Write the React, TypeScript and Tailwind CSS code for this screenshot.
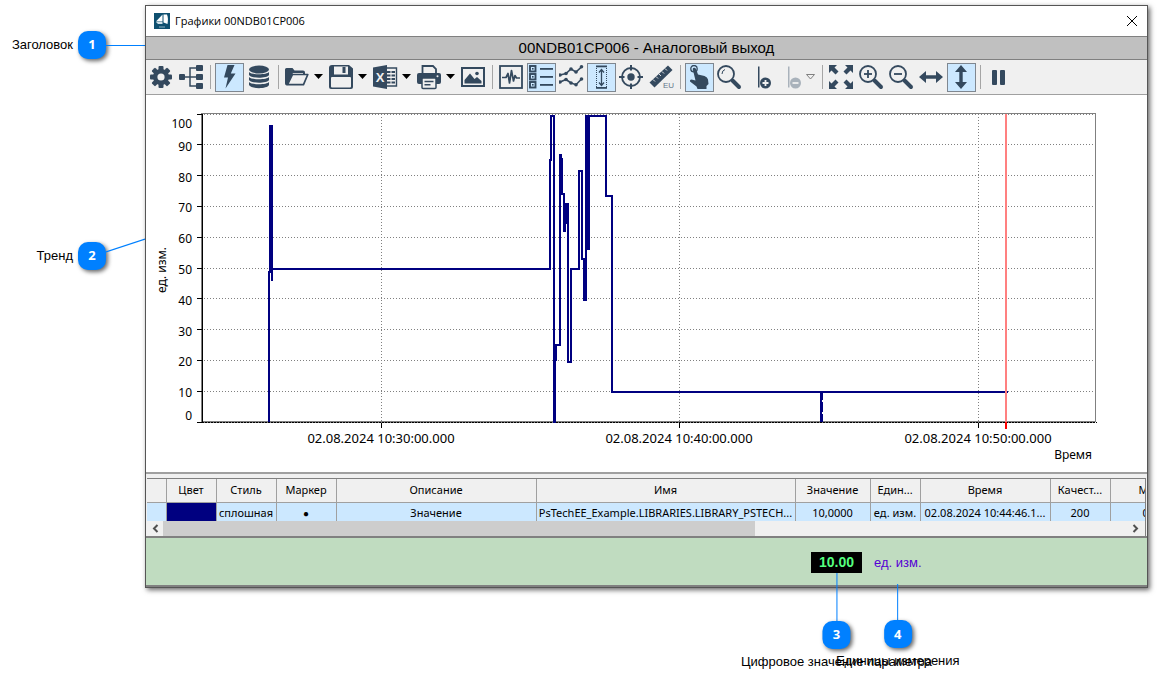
import React from 'react';

const INK = '#34495e';

interface IconProps {
    children: React.ReactNode;
    color?: string;
}

const Icon: React.FC<IconProps> = ({ children, color = INK }) => (
    <svg width="25" height="25" viewBox="0 0 25 25" fill={color} stroke="none" className="block shrink-0" aria-hidden="true">
        {children}
    </svg>
);

const GearIcon = () => (
    <Icon>
        {[0, 45, 90, 135].map((angle) => (
            <rect key={angle} x="9.5" y="1" width="5" height="22" rx="1" transform={`rotate(${angle} 12 12)`} />
        ))}
        <circle cx="12" cy="12" r="8" />
        <circle cx="12" cy="12" r="3.6" fill="#f0f0f0" />
    </Icon>
);

const TreeIcon = () => (
    <Icon>
        <rect x="0" y="9" width="6" height="6" rx="1" />
        <rect x="17" y="0" width="7" height="6" rx="1" />
        <rect x="17" y="9" width="7" height="6" rx="1" />
        <rect x="17" y="18" width="7" height="6" rx="1" />
        <path d="M6 12H17M17 3H11V21H17" fill="none" stroke={INK} strokeWidth="1.5" />
    </Icon>
);

const BoltIcon = () => (
    <Icon>
        <path d="M10.5 0H17.5L13.8 8.5H18.5L8.5 23.5L11 12.5H7Z" />
    </Icon>
);

const DatabaseIcon = () => (
    <Icon>
        <ellipse cx="12" cy="4.5" rx="10" ry="4" />
        <path d="M2 7C4 10 20 10 22 7V10C20 13.6 4 13.6 2 10Z" />
        <path d="M2 12C4 15 20 15 22 12V15C20 18.6 4 18.6 2 15Z" />
        <path d="M2 17C4 20 20 20 22 17V20C20 24.2 4 24.2 2 20Z" />
    </Icon>
);

const FolderIcon = () => (
    <Icon>
        <path d="M2 20.5Q0 20.5 0 18.5V4.5Q0 3 1.5 3H7.5L9.5 5.5H18Q20 5.5 20 7.5V9H18V8H8L3.5 17.5Z" />
        <path d="M7.5 9.5H22.8L18.5 19.7H2.5Z" fill="#f0f0f0" stroke={INK} strokeWidth="1.7" strokeLinejoin="round" />
    </Icon>
);

const SaveIcon = () => (
    <Icon>
        <path d="M3 0H20L24 3.5V22Q24 24 22 24H2Q0 24 0 22V3Q0 0 3 0Z" />
        <rect x="5" y="1.5" width="14" height="8" fill="#f0f0f0" />
        <rect x="13.5" y="2" width="3" height="6" />
        <rect x="2" y="12" width="20" height="10.5" rx="1" fill="#f0f0f0" />
    </Icon>
);

const ExcelIcon = () => (
    <Icon>
        <path d="M12 3H23.5V21H12Z" fill="#f0f0f0" stroke={INK} strokeWidth="1.4" />
        <path d="M14 7H22M14 10.5H22M14 14H22M14 17.5H22" stroke={INK} strokeWidth="2" strokeDasharray="3.5 1" />
        <path d="M0 2.5L14 0V24L0 21.5Z" />
        <text x="7" y="17" textAnchor="middle" fontSize="13" fontWeight="700" fontFamily="Liberation Sans, sans-serif" fill="#f0f0f0">X</text>
    </Icon>
);

const PrintIcon = () => (
    <Icon>
        <path d="M5.5 8V1H16L19 4V8" fill="none" stroke={INK} strokeWidth="1.8" />
        <path d="M2 8H22Q24 8 24 10V17Q24 19 22 19H2Q0 19 0 17V10Q0 8 2 8Z" />
        <rect x="5" y="13" width="14" height="10.5" rx="1" fill="#f0f0f0" stroke={INK} strokeWidth="1.5" />
        <path d="M7.5 16.5H16.5M7.5 19.8H13.5" stroke={INK} strokeWidth="1.4" />
        <circle cx="20.5" cy="11.2" r="1" fill="#f0f0f0" />
    </Icon>
);

const PictureIcon = () => (
    <Icon>
        <rect x="1" y="3" width="22" height="18" fill="#f0f0f0" stroke={INK} strokeWidth="2" />
        <path d="M3.5 18.5V15L9 8.5L13.5 14L16 12L20.5 16V18.5Z" />
        <circle cx="16" cy="8.5" r="1.8" />
    </Icon>
);

const PulseIcon = () => (
    <Icon>
        <rect x="1" y="1" width="22" height="22" fill="none" stroke={INK} strokeWidth="1.8" />
        <path d="M3 12.5H7L9 8.5L10.5 18L12.5 5.5L14.5 16L16 10.5L17.5 13H21" fill="none" stroke={INK} strokeWidth="1.7" strokeLinejoin="round" />
    </Icon>
);

const LegendIcon = () => (
    <Icon>
        {[1, 9, 17].map((y) => (
            <g key={y}>
                <rect x="1" y={y} width="5.5" height="5.5" fill="none" stroke={INK} strokeWidth="1.9" />
                <rect x="3" y={y + 2} width="1.6" height="1.6" />
                <rect x="11" y={y + 2} width="13" height="1.8" />
            </g>
        ))}
    </Icon>
);

const upperSeries = [[1, 10], [7, 8.5], [12, 4], [17, 7], [22.5, 1.8]];
const lowerSeries = [[1, 17], [7, 14.5], [12, 18], [17, 19.7], [22.5, 14]];

const SeriesIcon = () => (
    <Icon>
        {[upperSeries, lowerSeries].map((series, i) => (
            <g key={i}>
                <polyline points={series.map((p) => p.join(',')).join(' ')} fill="none" stroke={INK} strokeWidth="1.6" />
                {series.map(([x, y]) => <circle key={x} cx={x} cy={y} r="1.8" />)}
            </g>
        ))}
    </Icon>
);

const RangeIcon = () => (
    <Icon>
        <rect x="7" y="0.5" width="11" height="1.8" />
        <rect x="7" y="22" width="11" height="1.8" />
        <path d="M7.5 3V22M17.5 3V22" fill="none" stroke={INK} strokeWidth="1" strokeDasharray="1 1" />
        <path d="M12.5 5V20M10 7.5L12.5 4.5L15 7.5M10 17.5L12.5 20.5L15 17.5" fill="none" stroke={INK} strokeWidth="1.3" />
    </Icon>
);

const TargetIcon = () => (
    <Icon>
        <circle cx="12" cy="12" r="9" fill="none" stroke={INK} strokeWidth="1.8" />
        <circle cx="12" cy="12" r="3.7" />
        <path d="M12 0V5.5M12 18.5V24M0 12H5.5M18.5 12H24" stroke={INK} strokeWidth="2" />
    </Icon>
);

const RulerIcon = () => (
    <Icon>
        <path d="M0.5 17.5L19 0.5L23.5 5L5.5 22.5Z" />
        <path d="M4 14.5L6 16.5M7 11.5L9 13.5M10 9L12 11M13 6.5L15 8.5M16 3.5L18 5.5" stroke="#f0f0f0" strokeWidth="0.9" />
        <text x="14" y="23" fontSize="8" fontFamily="Liberation Sans, sans-serif" fill="#65768a">EU</text>
    </Icon>
);

const HandIcon = () => (
    <Icon>
        <circle cx="7" cy="3.7" r="3.2" fill="none" stroke={INK} strokeWidth="1.3" />
        <path d="M5.7 4Q6 2.5 7.5 2.7Q8.7 3 9 4L11 9.5L17.5 11Q20.5 12 21 14.5L21.5 19L19.5 21V24H10.5L9.5 21.5L3 16.5Q2.5 14.5 4.5 14.5L8.5 15.5Z" />
    </Icon>
);

interface LensProps {
    sign?: 'plus' | 'minus';
}

const LensIcon: React.FC<LensProps> = ({ sign }) => (
    <Icon>
        <circle cx="9" cy="9" r="8" fill="none" stroke={INK} strokeWidth="1.8" />
        <path d="M15.5 15.5L22 22" stroke={INK} strokeWidth="4" strokeLinecap="round" />
        {sign && <path d="M5 9H13" stroke={INK} strokeWidth="1.8" />}
        {sign === 'plus' && <path d="M9 5V13" stroke={INK} strokeWidth="1.8" />}
        {!sign && <path d="M5 9Q5 5.5 8 4.5" fill="none" stroke={INK} strokeWidth="1" />}
    </Icon>
);

const CursorIcon: React.FC<{ sign: 'plus' | 'minus' }> = ({ sign }) => (
    <Icon color={sign === 'plus' ? INK : '#a9b2bb'}>
        <rect x="11" y="1.5" width="1.5" height="21" />
        <circle cx="18.5" cy="18" r="5.5" />
        <path d={sign === 'plus' ? 'M15.5 18H21.5M18.5 15V21' : 'M15.5 18H21.5'} stroke="#f0f0f0" strokeWidth="1.8" />
    </Icon>
);

const ExpandIcon = () => (
    <Icon>
        {[0, 90, 180, 270].map((angle) => (
            <path key={angle} d="M0 0H8L5.5 2.5L9.5 6.5L6.5 9.5L2.5 5.5L0 8Z" transform={`rotate(${angle} 12 12)`} />
        ))}
    </Icon>
);

const ArrowsIcon: React.FC<{ vertical?: boolean }> = ({ vertical }) => (
    <Icon>
        <path
            d="M0 12L7 6V10.3H17V6L24 12L17 18V13.7H7V18Z"
            transform={vertical ? 'rotate(90 12 12)' : undefined}
        />
    </Icon>
);

const PauseIcon = () => (
    <Icon>
        <rect x="5" y="5" width="5" height="15" rx="1" />
        <rect x="13" y="5" width="5" height="15" rx="1" />
    </Icon>
);

interface ToolProps {
    label: string;
    active?: boolean;
    menu?: boolean;
    disabled?: boolean;
    children: React.ReactNode;
}

const Tool: React.FC<ToolProps> = ({ label, active, menu, disabled, children }) => (
    <div className={menu ? 'flex shrink-0 w-11' : 'flex shrink-0 w-[30px]'}>
        <button
            type="button"
            aria-label={label}
            aria-pressed={active}
            disabled={disabled}
            className={`flex items-center justify-center w-[29px] h-[29px] border ${active ? 'border-[#7f8790] bg-[#cce8ff]' : 'border-transparent'}`}
        >
            {children}
        </button>
        {menu && (
            <button type="button" aria-label={`${label}: меню`} disabled={disabled} className="flex items-center justify-center w-3">
                <svg width="9" height="6" viewBox="0 0 9 6" aria-hidden="true">
                    {disabled
                        ? <path d="M0.5 0.5H8.5L4.5 5Z" fill="none" stroke="#808080" />
                        : <path d="M0 0H9L4.5 5Z" fill="#000" />}
                </svg>
            </button>
        )}
    </div>
);

const Separator = () => <div className="shrink-0 w-px h-6 ml-[3px] mr-1 bg-[#a5a5a5]" />;

const Toolbar = () => (
    <div className="flex items-center h-[35px] pl-px bg-[#f0f0f0] border-b border-[#a0a0a0] overflow-hidden">
        <Tool label="Настройки"><GearIcon /></Tool>
        <Tool label="Дерево"><TreeIcon /></Tool>
        <Separator />
        <Tool label="Оперативные данные" active><BoltIcon /></Tool>
        <Tool label="Архив"><DatabaseIcon /></Tool>
        <Separator />
        <Tool label="Открыть" menu><FolderIcon /></Tool>
        <Tool label="Сохранить" menu><SaveIcon /></Tool>
        <Tool label="Экспорт в Excel" menu><ExcelIcon /></Tool>
        <Tool label="Печать" menu><PrintIcon /></Tool>
        <Tool label="Изображение"><PictureIcon /></Tool>
        <Separator />
        <Tool label="График"><PulseIcon /></Tool>
        <Tool label="Легенда" active><LegendIcon /></Tool>
        <Tool label="Кривые"><SeriesIcon /></Tool>
        <Tool label="Диапазон" active><RangeIcon /></Tool>
        <Tool label="Центрировать"><TargetIcon /></Tool>
        <Tool label="Единицы"><RulerIcon /></Tool>
        <Separator />
        <Tool label="Перемещение" active><HandIcon /></Tool>
        <Tool label="Лупа"><LensIcon /></Tool>
        <Tool label="Добавить курсор"><CursorIcon sign="plus" /></Tool>
        <Tool label="Удалить курсор" menu disabled><CursorIcon sign="minus" /></Tool>
        <Separator />
        <Tool label="Показать всё"><ExpandIcon /></Tool>
        <Tool label="Увеличить"><LensIcon sign="plus" /></Tool>
        <Tool label="Уменьшить"><LensIcon sign="minus" /></Tool>
        <Tool label="По горизонтали"><ArrowsIcon /></Tool>
        <Tool label="По вертикали" active><ArrowsIcon vertical /></Tool>
        <Separator />
        <Tool label="Пауза"><PauseIcon /></Tool>
    </div>
);

// y of the grid line and of its label's baseline
const valueTicks = [
    { label: '100', y: 114, text: 128 },
    { label: '90', y: 144, text: 151 },
    { label: '80', y: 175, text: 182 },
    { label: '70', y: 206, text: 212 },
    { label: '60', y: 237, text: 243 },
    { label: '50', y: 268, text: 274 },
    { label: '40', y: 298, text: 305 },
    { label: '30', y: 329, text: 336 },
    { label: '20', y: 360, text: 366 },
    { label: '10', y: 391, text: 397 },
    { label: '0', y: 422, text: 420 },
];

const timeTicks = [
    { label: '02.08.2024 10:30:00.000', x: 381 },
    { label: '02.08.2024 10:40:00.000', x: 679 },
    { label: '02.08.2024 10:50:00.000', x: 978 },
];

const trendPath = [
    'M269 422V272H270V126H272V281',
    'M271 126V272',
    'M272 269H550V160H551V116H554V422H555V360H556V345H560V155H561V159H562V194H564V231H565V204H568V224',
    'M566 204V224M568 204V362H571V269H579V171H582V259H584V300H586V116H589V249H588V116H606V196H612V392H1008',
    'M586 116V249M588 116V249M585 259V300',
    'M821 392V422M822 392V400M822 402V412M822 414V422',
].join('');

const TrendChart = () => (
    <svg
        viewBox="146 95 1001 377"
        className="block w-full h-auto bg-white"
        fontFamily="'Noto Sans', sans-serif"
        fontSize="13"
        role="img"
        aria-label="Тренд"
    >
        <g stroke="#808080" strokeWidth="1" strokeDasharray="1 2" fill="none" shapeRendering="crispEdges">
            {valueTicks.map((tick) => <path key={tick.label} d={`M204 ${tick.y + 0.5}H1095`} />)}
            {timeTicks.map((tick) => <path key={tick.x} d={`M${tick.x + 0.5} 114V422`} />)}
        </g>
        <path d="M201.5 422V113.5H1095.5V421.5H202" fill="none" stroke="#808080" shapeRendering="crispEdges" />
        <path d="M202.5 114V423" stroke="#000" shapeRendering="crispEdges" />
        <path d="M202 422.5H1097" stroke="#000" strokeDasharray="2 1" shapeRendering="crispEdges" />
        <g stroke="#000" shapeRendering="crispEdges">
            {valueTicks.map((tick) => <path key={tick.label} d={`M197 ${tick.y + 0.5}H202`} />)}
            {timeTicks.map((tick) => <path key={tick.x} d={`M${tick.x + 0.5} 423V428`} />)}
        </g>
        <g fill="#000" textAnchor="end" fontSize="12">
            {valueTicks.map((tick) => <text key={tick.label} x="192" y={tick.text}>{tick.label}</text>)}
        </g>
        <g fill="#000" textAnchor="middle">
            {timeTicks.map((tick) => <text key={tick.x} x={tick.x} y="443">{tick.label}</text>)}
        </g>
        <text x="1092" y="459" textAnchor="end" fontSize="12">Время</text>
        <text transform="translate(166 270) rotate(-90)" textAnchor="middle" fontSize="12">ед. изм.</text>
        <path d={trendPath} fill="none" stroke="#000080" strokeWidth="2" shapeRendering="crispEdges" />
        <path d="M1006 114V422" stroke="#ff8080" strokeWidth="2" shapeRendering="crispEdges" />
        <path d="M1006 422V429" stroke="#ff0000" strokeWidth="2" shapeRendering="crispEdges" />
    </svg>
);

const columns = [
    { title: 'Цвет', value: '', width: 50 },
    { title: 'Стиль', value: 'сплошная', width: 60 },
    { title: 'Маркер', value: '●', width: 60 },
    { title: 'Описание', value: 'Значение', width: 200 },
    { title: 'Имя', value: 'PsTechEE_Example.LIBRARIES.LIBRARY_PSTECH...', width: 259 },
    { title: 'Значение', value: '10,0000', width: 75 },
    { title: 'Един...', value: 'ед. изм.', width: 50 },
    { title: 'Время', value: '02.08.2024 10:44:46.1...', width: 130 },
    { title: 'Качест...', value: '200', width: 60 },
];

const LegendTable = () => (
    <div className="border-t-2 border-[#a0a0a0] bg-[#f0f0f0] pt-1">
        <div className="mx-px border-t border-r border-[#808080]">
            <div className="h-[42px] overflow-hidden">
                <table className="table-fixed w-[1038px] border-collapse font-['Noto_Sans',sans-serif] text-[11px] text-black text-center whitespace-nowrap">
                    <colgroup>
                        <col className="w-[19px]" />
                        {columns.map((col) => <col key={col.title} style={{ width: col.width }} />)}
                        <col />
                    </colgroup>
                    <thead>
                        <tr className="h-[23px] border-b border-[#a0a0a0]">
                            <th className="border-r border-[#a0a0a0]" aria-label="Строка" />
                            {columns.map((col) => (
                                <th key={col.title} className="p-0 font-normal border-r border-[#a0a0a0]">{col.title}</th>
                            ))}
                            <th className="p-0 pl-7 text-left font-normal">М</th>
                        </tr>
                    </thead>
                    <tbody>
                        <tr className="h-[22px] bg-[#cce8ff]">
                            <td className="border-r border-[#a0a0a0]" />
                            {columns.map((col) => (
                                <td
                                    key={col.title}
                                    className={`p-0 border-r border-[#a0a0a0] ${col.title === 'Цвет' ? 'bg-[#000080]' : ''} ${col.title === 'Маркер' ? 'text-[10px]' : ''}`}
                                >
                                    {col.value}
                                </td>
                            ))}
                            <td className="p-0 pl-8 text-left">0</td>
                        </tr>
                    </tbody>
                </table>
            </div>
            <div className="flex items-stretch h-[15px]">
                <button type="button" aria-label="Прокрутить влево" className="flex items-center justify-center w-4">
                    <svg width="7" height="9" viewBox="0 0 7 9" aria-hidden="true">
                        <path d="M5.5 1L2 4.5L5.5 8" fill="none" stroke="#505050" strokeWidth="2" />
                    </svg>
                </button>
                <div className="flex-1">
                    <div className="w-8/13 h-full bg-[#cdcdcd]" />
                </div>
                <button type="button" aria-label="Прокрутить вправо" className="flex items-center justify-center w-5">
                    <svg width="7" height="9" viewBox="0 0 7 9" aria-hidden="true">
                        <path d="M1.5 1L5 4.5L1.5 8" fill="none" stroke="#505050" strokeWidth="2" />
                    </svg>
                </button>
            </div>
        </div>
    </div>
);

const Badge: React.FC<{ children: React.ReactNode }> = ({ children }) => (
    <span className="flex items-center justify-center shrink-0 w-7 h-7 rounded-[10px] bg-[#0080ff] text-white text-[13px] font-bold font-['Open_Sans',sans-serif] shadow-[2px_2px_4px_rgba(0,0,0,0.6)]">
        {children}
    </span>
);

const StatusPanel = () => (
    <div className="flex items-center h-[51px] pt-0.5 pl-[665px] border-y-2 border-[#808080] bg-[#c0dcc0] font-['Liberation_Sans',Arial,sans-serif]">
        <div className="relative">
            <output className="flex items-center justify-center w-[51px] h-[21px] bg-black text-[#55ff7f] text-[14px] font-bold">10.00</output>
            <div className="absolute top-full left-1/2 -translate-x-1/2 flex flex-col items-center">
                <div className="w-px h-12 bg-[#0080ff]" />
                <Badge>3</Badge>
                <span className="mt-1 text-[13px] leading-[18px] text-black whitespace-nowrap">Цифровое значение параметра</span>
            </div>
        </div>
        <div className="relative ml-3 text-[13px] text-[#5500d4]">
            ед. изм.
            <div className="absolute top-full left-1/2 -translate-x-1/2 mt-3 flex flex-col items-center">
                <div className="w-px h-9 bg-[#0080ff]" />
                <Badge>4</Badge>
                <span className="mt-1 text-[13px] leading-[18px] text-black whitespace-nowrap">Единицы измерения</span>
            </div>
        </div>
    </div>
);

const LogoIcon = () => (
    <svg width="16" height="16" viewBox="0 0 16 16" aria-hidden="true">
        <rect width="16" height="16" fill="#0f5070" />
        <path d="M2 8.5L8.5 1.5V8.5Z" fill="#fff" />
        <path d="M9.5 1.5H13Q14.5 5 13.5 11L9.5 9.5Z" fill="#fff" />
        <path d="M2 9H8.5V11H4Z" fill="#cfe0e8" />
        <path d="M5 14H11" stroke="#8fb3c4" />
    </svg>
);

const TrendWindow = () => (
    <main className="flex-1 min-w-0 self-start border border-[#555] bg-white shadow-[2px_2px_5px_rgba(0,0,0,0.6)]">
        <div className="flex items-center h-[30px] pl-2 pr-[9px]">
            <LogoIcon />
            <h1 className="ml-[5px] text-[11px] font-['Open_Sans',sans-serif] text-black">Графики 00NDB01CP006</h1>
            <button type="button" aria-label="Закрыть" className="ml-auto">
                <svg width="12" height="12" viewBox="0 0 12 12" aria-hidden="true">
                    <path d="M1 1L11 11M11 1L1 11" stroke="#000" strokeWidth="1" />
                </svg>
            </button>
        </div>
        <h2 className="flex items-center justify-center h-6 border-y border-[#808080] bg-[#c0c0c0] text-[15px] text-black font-['Liberation_Sans',Arial,sans-serif]">
            00NDB01CP006 - Аналоговый выход
        </h2>
        <Toolbar />
        <TrendChart />
        <LegendTable />
        <StatusPanel />
    </main>
);

const SideCallouts = () => (
    <aside className="shrink-0 w-[145px] pt-[26px] text-[13px] text-black font-['Liberation_Sans',Arial,sans-serif]">
        <div className="flex items-center h-7">
            <span className="w-[73px] mr-[5px] text-right">Заголовок</span>
            <Badge>1</Badge>
            <div className="flex-1 h-px bg-[#0080ff]" />
        </div>
        <div className="flex items-center h-7 mt-[183px]">
            <span className="w-[73px] mr-[5px] text-right">Тренд</span>
            <Badge>2</Badge>
            <svg width="39" height="36" viewBox="0 0 39 36" className="block" aria-hidden="true">
                <path d="M0 14L39 1" stroke="#0080ff" strokeWidth="1.2" />
            </svg>
        </div>
    </aside>
);

export default function App() {
    return (
        <div className="flex min-h-screen pt-[5px] pr-[9px] bg-white overflow-hidden">
            <SideCallouts />
            <TrendWindow />
        </div>
    );
}
